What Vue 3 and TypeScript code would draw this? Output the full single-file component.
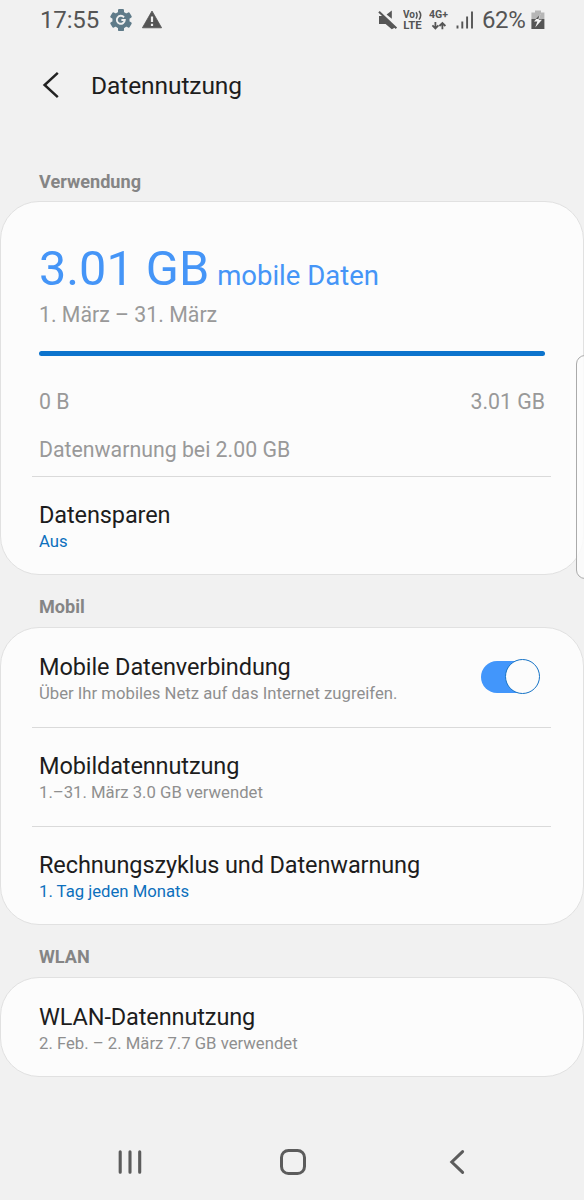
<script setup lang="ts">
import { ref } from 'vue'

interface Entry {
  title: string
  detail: string
  accent?: boolean
  toggle?: boolean
}

const saver: Entry = { title: 'Datensparen', detail: 'Aus', accent: true }

const mobileEntries: Entry[] = [
  { title: 'Mobile Datenverbindung', detail: 'Über Ihr mobiles Netz auf das Internet zugreifen.', toggle: true },
  { title: 'Mobildatennutzung', detail: '1.–31. März 3.0 GB verwendet' },
  { title: 'Rechnungszyklus und Datenwarnung', detail: '1. Tag jeden Monats', accent: true },
]

const wifi: Entry = { title: 'WLAN-Datennutzung', detail: '2. Feb. – 2. März 7.7 GB verwendet' }

const mobileOn = ref(true)
</script>

<template>
  <div class="screen">
    <header class="status">
      <div class="status-left">
        <span class="clock">17:55</span>
        <svg class="gear" width="22" height="24" viewBox="0 0 22 24">
          <g fill="#5f7b89">
            <circle cx="11" cy="12" r="8.6" />
            <rect v-for="a in [0, 60, 120]" :key="a" x="8" y="0.9" width="6" height="22.2" rx="1.2" :transform="`rotate(${a} 11 12)`" />
          </g>
          <path d="M14 9.4A4 4 0 1 0 14.8 12H11.4" fill="none" stroke="#f1f1f1" stroke-width="1.9" />
        </svg>
        <svg class="warn" width="22" height="19" viewBox="0 0 22 19">
          <path d="M11 1L20.6 17.8H1.4Z" fill="#555" stroke="#555" stroke-width="0.8" stroke-linejoin="round" />
          <path d="M11 6.6V12M11 13.8V16" stroke="#f1f1f1" stroke-width="2.2" />
        </svg>
      </div>
      <div class="status-right">
        <svg class="mute" width="20" height="20" viewBox="0 0 20 20">
          <path d="M1 6H5.2L17 17.4L13.8 19.2L7.6 14H1Z" fill="#555" />
          <path d="M8.6 4.4L13.8 0.4V8.8Z" fill="#555" />
          <path d="M1 1.8L18.4 18.2" stroke="#555" stroke-width="2" />
        </svg>
        <svg class="volte" width="20" height="20" viewBox="0 0 20 20">
          <text x="0" y="8.4" textLength="12" lengthAdjust="spacingAndGlyphs">Vo</text>
          <path d="M13 2.2Q15.2 5 13 8.6M16 1Q19.4 5 16 9.6" fill="none" stroke="#555" stroke-width="1.5" />
          <text x="0.3" y="19" textLength="18.4" lengthAdjust="spacingAndGlyphs">LTE</text>
        </svg>
        <svg class="fourg" width="20" height="20" viewBox="0 0 20 20">
          <text x="0" y="8.4" textLength="19" lengthAdjust="spacingAndGlyphs">4G+</text>
          <path d="M6.4 12V18.4M3.4 15.4L6.4 18.4L9.4 15.4M13.4 19.2V13M10.4 16L13.4 13L16.4 16" fill="none" stroke="#555" stroke-width="1.8" />
        </svg>
        <svg class="signal" width="18" height="18" viewBox="0 0 18 18">
          <path d="M1.5 14.5V17.6M6.3 10.4V17.6M11.1 5.4V17.6M16 0.6V17.6" stroke="#555" stroke-width="1.9" />
        </svg>
        <span class="percent">62%</span>
        <svg class="battery" width="14" height="20" viewBox="0 0 14 20">
          <path d="M4 0.4H10V2.6H13.4V9H0.4V2.6H4Z" fill="#b6b6b6" />
          <path d="M0.4 9H13.4V19H0.4Z" fill="#555" />
          <path d="M9.5 4L3 11.6H6.4L4.2 17.4L11 9.8H7.7Z" fill="#f4f4f4" />
          <path d="M8.6 5L4.7 9H7.4Z" fill="#555" />
        </svg>
      </div>
    </header>

    <div class="appbar">
      <svg class="back" width="18" height="28" viewBox="0 0 18 28">
        <path d="M15.8 1.8L2.6 14L15.8 26.2" fill="none" stroke="#222" stroke-width="2.5" />
      </svg>
      <h1>Datennutzung</h1>
    </div>

    <h2 class="first">Verwendung</h2>
    <section class="card">
      <div class="usage">
        <p class="amount"><span class="big">3.01 GB</span><span class="unit">mobile Daten</span></p>
        <p class="grey period">1. März – 31. März</p>
        <div class="bar"></div>
        <div class="grey scale"><span>0 B</span><span>3.01 GB</span></div>
        <p class="grey warning">Datenwarnung bei 2.00 GB</p>
      </div>
      <div class="row ruled">
        <div class="title">{{ saver.title }}</div>
        <div class="detail accent">{{ saver.detail }}</div>
      </div>
    </section>

    <h2>Mobil</h2>
    <section class="card">
      <div v-for="(e, i) in mobileEntries" :key="e.title" class="row" :class="{ ruled: i > 0 }">
        <div class="title">{{ e.title }}</div>
        <div class="detail" :class="{ accent: e.accent }">{{ e.detail }}</div>
        <button v-if="e.toggle" class="switch" :class="{ on: mobileOn }" :aria-label="e.title" @click="mobileOn = !mobileOn">
          <i></i>
        </button>
      </div>
    </section>

    <h2>WLAN</h2>
    <section class="card">
      <div class="row">
        <div class="title">{{ wifi.title }}</div>
        <div class="detail">{{ wifi.detail }}</div>
      </div>
    </section>

    <nav class="nav">
      <svg width="26" height="28" viewBox="0 0 26 28">
        <path d="M3.2 3.8V24.2M13 3.8V24.2M22.7 3.8V24.2" stroke="#5c5c5c" stroke-width="3.1" stroke-linecap="round" />
      </svg>
      <svg class="home" width="28" height="28" viewBox="0 0 28 28">
        <rect x="2.5" y="2.5" width="23" height="23" rx="7" fill="none" stroke="#5c5c5c" stroke-width="3" />
      </svg>
      <svg width="18" height="28" viewBox="0 0 18 28">
        <path d="M14.6 3.6L3.8 14L14.6 24.4" fill="none" stroke="#5c5c5c" stroke-width="3" stroke-linecap="round" />
      </svg>
    </nav>
    <div class="edge"></div>
  </div>
</template>

<style>
html,
body {
  margin: 0;
  background: #f1f1f1;
}
</style>

<style scoped>
.screen {
  position: relative;
  width: 584px;
  height: 1200px;
  overflow: hidden;
  background: #f1f1f1;
  font-family: Roboto, "Liberation Sans", sans-serif;
  color: #1d1d1d;
}
* {
  box-sizing: border-box;
}
h1, h2, p {
  margin: 0;
}
svg {
  display: block;
  flex: none;
}
.status {
  display: flex;
  justify-content: space-between;
  height: 40px;
  padding: 0 39px 0 40px;
  color: #555;
}
.status-left,
.status-right {
  display: flex;
  align-items: flex-start;
}
.clock,
.percent {
  line-height: 40px;
  font-size: 24px;
}
.clock { width: 60px; letter-spacing: -0.15px; }
.percent { width: 44px; margin-left: 8px; letter-spacing: -0.4px; }
.gear { margin: 8px 0 0 10px; }
.warn { margin: 10px 0 0 9px; }
.mute { margin-top: 10px; }
.volte { margin: 10px 0 0 5px; }
.fourg { margin: 10px 0 0 6px; }
.signal { margin: 11px 0 0 7px; }
.battery { margin: 10px 0 0 5px; }
.status text {
  font: 700 10px Roboto, sans-serif;
  fill: #555;
}
.appbar {
  display: flex;
  align-items: center;
  height: 92px;
  padding-left: 42px;
}
.back { margin-top: -3px; }
h1 {
  margin-left: 31px;
  font-size: 24.5px;
  font-weight: 400;
  line-height: 30px;
  letter-spacing: -0.08px;
}
h2 {
  height: 52px;
  padding: 19px 39px 0;
  font-size: 18.1px;
  font-weight: 700;
  line-height: 26px;
  color: #858585;
}
h2.first {
  height: 69px;
  padding-top: 37px;
}
.card {
  border: 1px solid #e1e1e1;
  border-radius: 39px;
  background: #fcfcfc;
}
.usage {
  height: 274px;
  padding: 37px 38px 0;
}
.amount {
  display: flex;
  align-items: baseline;
  height: 60px;
  line-height: 60px;
  color: #4595f7;
}
.big { font-size: 48.6px; }
.unit { margin-left: 8px; font-size: 27.5px; }
.grey {
  font-size: 21.3px;
  line-height: 26px;
  color: #999;
}
.period { margin-top: 3px; }
.bar {
  height: 5px;
  margin-top: 23px;
  border-radius: 2.5px;
  background: #0d74cd;
}
.scale {
  display: flex;
  justify-content: space-between;
  margin-top: 33px;
}
.warning { margin-top: 22px; }
.row {
  position: relative;
  height: 99px;
  padding: 25px 38px 0;
}
.row:last-child { height: 98px; }
.row.ruled::before {
  content: "";
  position: absolute;
  top: 0;
  left: 31px;
  right: 32px;
  height: 1px;
  background: #dadada;
}
.title {
  font-size: 23.5px;
  line-height: 28px;
  letter-spacing: -0.11px;
  white-space: nowrap;
}
.detail {
  margin-top: 1px;
  font-size: 16.7px;
  line-height: 24px;
  color: #8f8f8f;
  white-space: nowrap;
}
.detail.accent { color: #0d70bd; }
.switch {
  position: absolute;
  top: 33px;
  right: 43px;
  width: 59px;
  height: 32px;
  padding: 0;
  border: 0;
  border-radius: 17px;
  background: #bbb;
}
.switch i {
  position: absolute;
  top: -2px;
  left: 0;
  width: 35px;
  height: 35px;
  border: 1.5px solid #8a8a8a;
  border-radius: 50%;
  background: #fcfcfc;
}
.switch.on { background: linear-gradient(90deg, #4296fb 42px, transparent 42px); }
.switch.on i { left: 24px; border-color: #1673c6; }
.nav {
  display: flex;
  justify-content: space-between;
  margin-top: 71px;
  padding: 0 118px 0 117px;
}
.home { margin-right: 6px; }
.edge {
  position: absolute;
  top: 355px;
  left: 576px;
  width: 20px;
  height: 224px;
  border: 1px solid #aaa;
  border-radius: 9px;
  background: rgba(252, 252, 252, 0.85);
}
</style>
